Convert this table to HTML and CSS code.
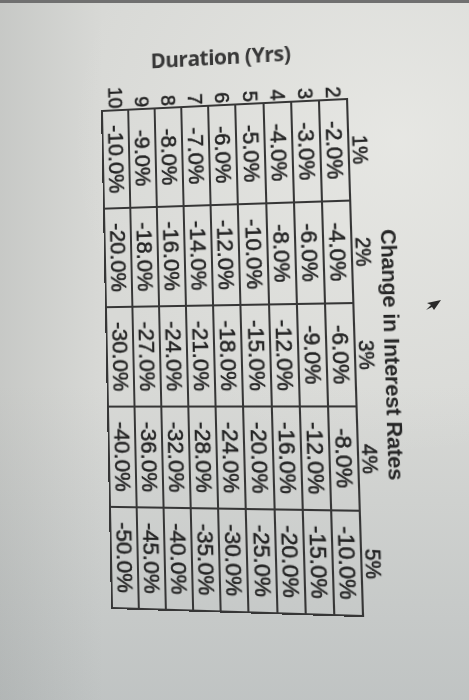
FILE: index.html
```html
<!DOCTYPE html>
<html lang="en">
<head>
<meta charset="utf-8">
<title>Change in Interest Rates</title>
<link rel="stylesheet" href="styles.css">
</head>
<body>
<main class="photo">
  <figure class="sheet">
    <div class="ylabel">Duration (Yrs)</div>
    <table class="rates">
      <caption>Change in Interest Rates</caption>
      <thead>
        <tr><th class="corner"></th><th>1%</th><th>2%</th><th>3%</th><th>4%</th><th>5%</th></tr>
      </thead>
      <tbody>
        <tr><th>2</th><td>-2.0%</td><td>-4.0%</td><td>-6.0%</td><td>-8.0%</td><td>-10.0%</td></tr>
        <tr><th>3</th><td>-3.0%</td><td>-6.0%</td><td>-9.0%</td><td>-12.0%</td><td>-15.0%</td></tr>
        <tr><th>4</th><td>-4.0%</td><td>-8.0%</td><td>-12.0%</td><td>-16.0%</td><td>-20.0%</td></tr>
        <tr><th>5</th><td>-5.0%</td><td>-10.0%</td><td>-15.0%</td><td>-20.0%</td><td>-25.0%</td></tr>
        <tr><th>6</th><td>-6.0%</td><td>-12.0%</td><td>-18.0%</td><td>-24.0%</td><td>-30.0%</td></tr>
        <tr><th>7</th><td>-7.0%</td><td>-14.0%</td><td>-21.0%</td><td>-28.0%</td><td>-35.0%</td></tr>
        <tr><th>8</th><td>-8.0%</td><td>-16.0%</td><td>-24.0%</td><td>-32.0%</td><td>-40.0%</td></tr>
        <tr><th>9</th><td>-9.0%</td><td>-18.0%</td><td>-27.0%</td><td>-36.0%</td><td>-45.0%</td></tr>
        <tr><th>10</th><td>-10.0%</td><td>-20.0%</td><td>-30.0%</td><td>-40.0%</td><td>-50.0%</td></tr>
      </tbody>
    </table>
  </figure>
  <svg class="cursor" width="16" height="11" viewBox="0 0 16 11" aria-hidden="true">
    <polygon points="15,0 1,3 5,5 0,10 6,7 8,10" fill="#2a2a2a"/>
  </svg>
</main>
</body>
</html>
```

FILE: styles.css
```css
html, body {
  margin: 0;
  padding: 0;
}

body {
  width: 469px;
  height: 700px;
  overflow: hidden;
  background:
    linear-gradient(to bottom, #707070 0, #707070 3px, transparent 3px),
    linear-gradient(to right, rgba(95, 100, 100, 0.14) 0, rgba(95, 100, 100, 0) 22%),
    radial-gradient(ellipse 70% 45% at 85% 20%, rgba(240, 240, 236, 0.6), rgba(240, 240, 236, 0) 100%),
    linear-gradient(to bottom, rgba(140, 150, 155, 0) 55%, rgba(140, 150, 155, 0.32) 100%),
    #d8d9d6;
}

.photo {
  position: relative;
  width: 469px;
  height: 700px;
  overflow: hidden;
}

.sheet {
  margin: 0;
  width: max-content;
  transform-origin: 0 0;
  transform: matrix3d(0.949556, -0.0645844, 0, -0.000157183,
                      0.015193, 0.967948, 0, -0.0000429192,
                      0, 0, 1, 0,
                      99.880583, 35.53258, 0, 1.003462);
}

.ylabel {
  box-sizing: border-box;
  height: 48px;
  padding: 15px 0 5px 52px;
  font-family: "Open Sans", "Liberation Sans", sans-serif;
  font-weight: 700;
  font-size: 21px;
  line-height: 28px;
  letter-spacing: -0.5px;
  color: #383838;
}

.rates {
  writing-mode: vertical-rl;
  text-orientation: sideways;
  border-collapse: collapse;
  margin: 0;
  font-family: "Liberation Sans", Arial, sans-serif;
  color: #222222;
  -webkit-text-stroke: 0.5px #222222;
}

.rates caption {
  caption-side: top;
  padding: 0;
  padding-inline-start: 28px;
  font-weight: 700;
  font-size: 21px;
  line-height: 28px;
  letter-spacing: -0.2px;
  text-align: center;
  color: #262626;
  -webkit-text-stroke: 0;
}

.rates th,
.rates td {
  padding: 0;
  text-align: center;
  vertical-align: middle;
}

.rates thead th {
  inline-size: 100px;
  font-weight: 400;
  font-size: 20px;
  line-height: 20px;
}

.rates thead th.corner {
  inline-size: 28px;
}

.rates tbody th {
  inline-size: 28px;
  font-weight: 400;
  font-size: 20px;
  line-height: 25.1px;
  text-align: end;
  padding-inline-end: 1px;
}

.rates td {
  inline-size: 96px;
  border: 2px solid #363636;
  font-size: 22px;
  line-height: 25.1px;
}

.cursor {
  position: absolute;
  left: 426px;
  top: 300px;
}
```
